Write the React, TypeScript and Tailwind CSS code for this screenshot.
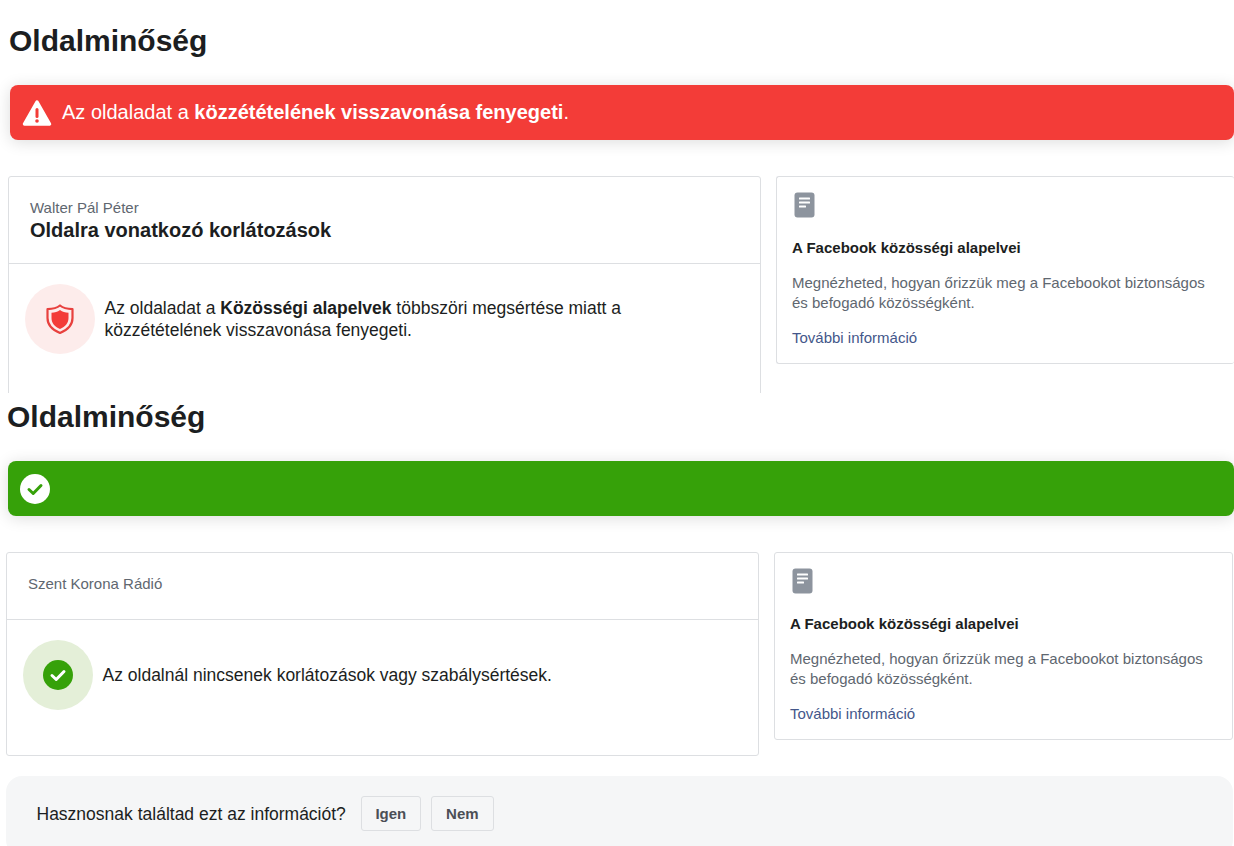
const font = "[font-family:'Liberation_Sans',Arial,sans-serif]";

function DocIcon() {
  return (
    <svg width="21" height="26" viewBox="0 0 21 26" className="block ml-[2px]">
      <rect x="0.5" y="0.5" width="20" height="25" rx="3" fill="#8d949e" />
      <rect x="5" y="5.5" width="11" height="2" rx="0.5" fill="#fff" />
      <rect x="5" y="9.5" width="11" height="2" rx="0.5" fill="#fff" />
      <rect x="5" y="13.5" width="7" height="2" rx="0.5" fill="#fff" />
    </svg>
  );
}

function SideCard({ className }: { className: string }) {
  return (
    <div className={`border border-[#dddfe2] rounded-[3px] bg-white pl-[15px] pr-[16px] pt-[15px] ${className}`}>
      <DocIcon />
      <div className="mt-[21px] text-[15px] leading-[18px] font-bold text-[#1c1e21]">A Facebook közösségi alapelvei</div>
      <div className="mt-[16px] text-[15px] leading-[20px] text-[#606770]">
        Megnézheted, hogyan őrizzük meg a Facebookot biztonságos
        <br />
        és befogadó közösségként.
      </div>
      <div className="mt-[15px] text-[15px] leading-[20px] text-[#44578a]">További információ</div>
    </div>
  );
}

function Title() {
  return <h1 className="text-[30px] leading-[38px] font-bold text-[#1c1e21]">Oldalminőség</h1>;
}

export default function App() {
  return (
    <div className={`w-[1234px] h-[846px] overflow-hidden bg-white ${font}`}>
      <section className="h-[393px] overflow-hidden pl-[8px] pt-[22px]">
        <div className="pl-px"><Title /></div>
        <div className="ml-[2px] mt-[25px] h-[55px] rounded-[8px] bg-[#f33c38] shadow-[0_2px_16px_rgba(0,0,0,0.14)] flex items-center pl-[12px] text-white text-[20px]">
          <svg width="30" height="28" viewBox="0 0 30 28" className="block mr-[10px]">
            <path d="M15 3 L27.5 25 H2.5 Z" fill="#fff" stroke="#fff" strokeWidth="3.5" strokeLinejoin="round" />
            <rect x="13.5" y="9" width="3" height="10" rx="1.5" fill="#f33c38" />
            <circle cx="15" cy="22" r="1.8" fill="#f33c38" />
          </svg>
          <span className="-mt-px">Az oldaladat a <b>közzétételének visszavonása fenyegeti</b>.</span>
        </div>
        <div className="mt-[36px] flex items-start">
          <div className="w-[753px] h-[260px] shrink-0 border border-[#dddfe2] rounded-[3px] bg-white">
            <div className="h-[87px] border-b border-[#dddfe2] pl-[21px] pt-[22px]">
              <div className="text-[15px] leading-[18px] text-[#606770]">Walter Pál Péter</div>
              <div className="mt-px text-[20px] leading-[24px] font-bold text-[#1c1e21]">Oldalra vonatkozó korlátozások</div>
            </div>
            <div className="flex pl-[16px] pt-[20px]">
              <div className="w-[70px] h-[70px] rounded-full bg-[#fdeceb] flex items-center justify-center shrink-0">
                <svg width="28" height="30" viewBox="0 0 28 30" className="block">
                  <path d="M14 1.5 C17 4 21 5 26.5 5.2 V14 C26.5 21 21.5 26 14 29 C6.5 26 1.5 21 1.5 14 V5.2 C7 5 11 4 14 1.5 Z" fill="none" stroke="#e8413e" strokeWidth="2.2" strokeLinejoin="round" />
                  <path d="M14 6 C16.5 7.8 19 8.6 22.5 8.8 V14 C22.5 19 19.5 22.5 14 25 C8.5 22.5 5.5 19 5.5 14 V8.8 C9 8.6 11.5 7.8 14 6 Z" fill="#f33c38" />
                </svg>
              </div>
              <div className="ml-[9.5px] mt-[13px] text-[17.5px] leading-[22px] text-[#1c1e21]">
                Az oldaladat a <b>Közösségi alapelvek</b> többszöri megsértése miatt a
                <br />
                közzétételének visszavonása fenyegeti.
              </div>
            </div>
          </div>
          <SideCard className="ml-[15px] w-[458px] h-[188px] border-r-0" />
        </div>
      </section>

      <section className="pl-[6px] pr-px">
        <div className="pt-[5px] pl-px"><Title /></div>
        <div className="ml-[2px] -mr-px mt-[25px] h-[55px] rounded-[8px] bg-[#36a109] shadow-[0_2px_16px_rgba(0,0,0,0.14)] flex items-center pl-[12px]">
          <svg width="30" height="30" viewBox="0 0 30 30" className="block">
            <circle cx="15" cy="15" r="15" fill="#fff" />
            <path d="M9 15.5 L13.2 19.5 L21 11.5" fill="none" stroke="#36a109" strokeWidth="3" strokeLinecap="round" strokeLinejoin="round" />
          </svg>
        </div>
        <div className="mt-[36px] flex items-start">
          <div className="w-[753px] h-[204px] shrink-0 border border-[#dddfe2] rounded-[3px] bg-white">
            <div className="h-[67px] border-b border-[#dddfe2] pl-[21px] pt-[22px]">
              <div className="text-[15px] leading-[18px] text-[#606770]">Szent Korona Rádió</div>
            </div>
            <div className="flex items-center pl-[16px] pt-[20px]">
              <div className="w-[70px] h-[70px] rounded-full bg-[#e4efd8] flex items-center justify-center shrink-0">
                <svg width="30" height="30" viewBox="0 0 30 30" className="block">
                  <circle cx="15" cy="15" r="15" fill="#36a109" />
                  <path d="M9 15.5 L13.2 19.5 L21 11.5" fill="none" stroke="#fff" strokeWidth="3" strokeLinecap="round" strokeLinejoin="round" />
                </svg>
              </div>
              <div className="ml-[9.5px] text-[17.5px] leading-[23px] text-[#1c1e21]">Az oldalnál nincsenek korlátozások vagy szabálysértések.</div>
            </div>
          </div>
          <SideCard className="ml-[15px] w-[459px] h-[188px]" />
        </div>
        <div className="mt-[20px] h-[80px] rounded-[16px] bg-[#f5f6f7] flex items-start pl-[30.5px] pt-[20px]">
          <div className="h-[35px] pt-px flex items-center text-[17.5px] text-[#1c1e21]">Hasznosnak találtad ezt az információt?</div>
          <div className="ml-[15px] w-[60px] h-[35px] pt-px border border-[#dddfe2] rounded-[3px] bg-[#f5f6f7] flex items-center justify-center text-[15px] font-bold text-[#4b4f56]">Igen</div>
          <div className="ml-[10px] w-[63px] h-[35px] pt-px border border-[#dddfe2] rounded-[3px] bg-[#f5f6f7] flex items-center justify-center text-[15px] font-bold text-[#4b4f56]">Nem</div>
        </div>
      </section>
    </div>
  );
}
